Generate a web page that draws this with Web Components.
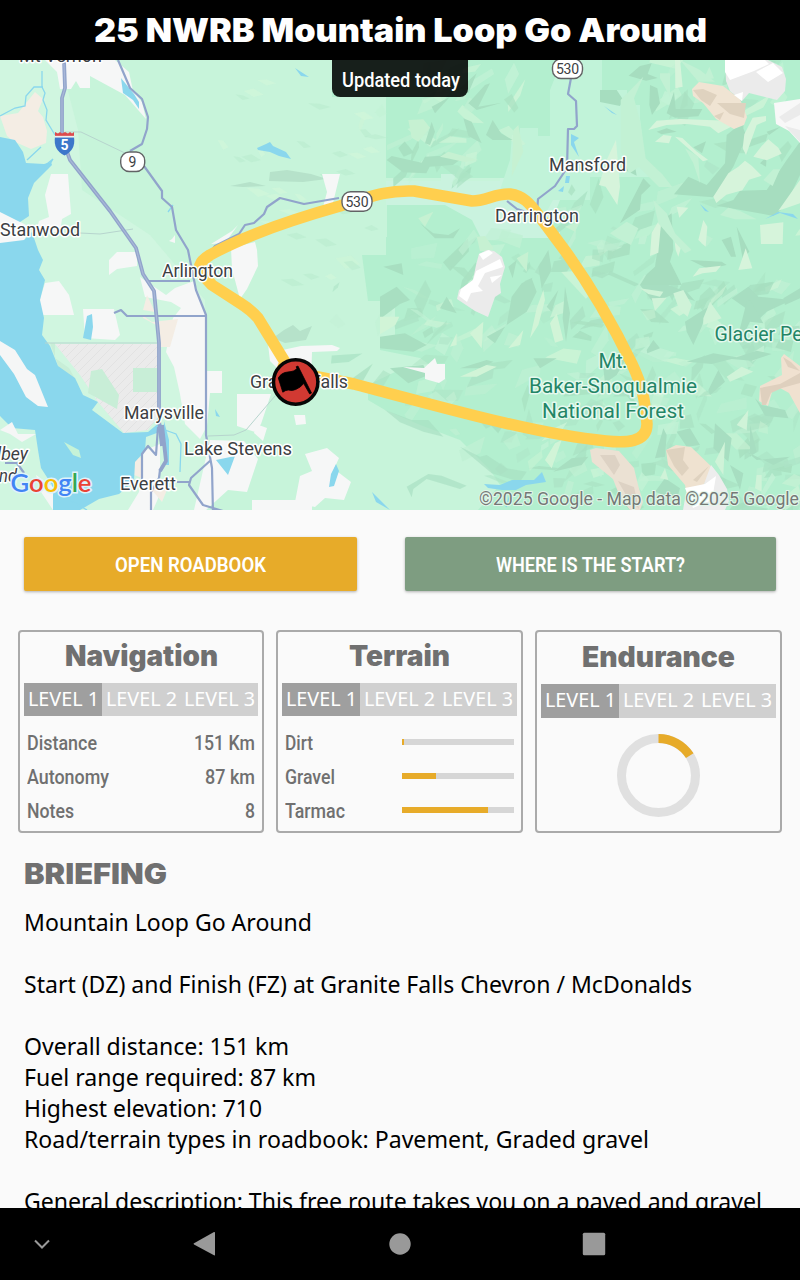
<!DOCTYPE html>
<html lang="en">
<head>
<meta charset="utf-8">
<title>25 NWRB Mountain Loop Go Around</title>
<style>
html, body {
    margin: 0;
    height: 100%;
    overflow: hidden;
    background: #fafafa;
}
</style>
</head>
<body>

<roadbook-page></roadbook-page>

<script>

// < ======================================================
// < Utility Functions
// < ======================================================

/**
 * Attach an open shadow root with styles and markup
 *
 * @param {HTMLElement} element
 * @param {string} css
 * @param {string} html
 */
function render(element, css, html) {
    const root = element.shadowRoot || element.attachShadow({ mode: 'open' });
    root.innerHTML = `<style>${css}</style>${html}`;
}

/**
 * Seeded random number generator, keeps the relief stable between loads
 *
 * @param {number} seed
 * @returns {() => number}
 */
function seeded(seed) {
    return () => {
        seed = (seed * 1664525 + 1013904223) % 4294967296;
        return seed / 4294967296;
    };
}

// < ======================================================
// < Class: Fit Text
// < ======================================================

/**
 * Custom element `<fit-text>`
 * - Condenses or widens one line of text to the `width` attribute
 */
class FitText extends HTMLElement {

    connectedCallback() {
        const width = Number(this.getAttribute('width'));
        render(this, `
            :host { display: inline-block; width: ${width}px; white-space: nowrap; text-align: left; }
            span { display: inline-block; transform-origin: 0 50%; }
        `, `<span><slot></slot></span>`);
        const span = this.shadowRoot.querySelector('span');
        const natural = span.getBoundingClientRect().width;
        if (natural) span.style.transform = `scaleX(${width / natural})`;
    }

}

// < ======================================================
// < Class: Page Header
// < ======================================================

class PageHeader extends HTMLElement {

    connectedCallback() {
        render(this, `
            :host {
                display: flex;
                align-items: center;
                justify-content: center;
                height: 60px;
                background: #000;
                color: #fff;
                font: 900 33px/59px Inter, sans-serif;
            }
        `, `<slot></slot>`);
    }

}

// < ======================================================
// < Class: Route Map
// < ======================================================

/**
 * Relief facets scattered through the forest
 *
 * @returns {string} SVG polygons
 */
function relief() {
    const random = seeded(77);
    const colors = ['#a7dfc0', '#ace4c6', '#c3f2d6', '#cdf4d7', '#bff0d3', '#a9e1c2'];
    let out = '';
    for (let i = 0; i < 560; i++) {
        const x = 335 + random() * 475;
        const y = 58 + random() * 455;
        if (x < 400 && random() < 0.8) continue;
        if (y > 380 && x < 370 + (y - 380) * 1.25) continue;
        if (y > 178 && y < 232 && x < 560) continue;
        if (x > 520 && x < 660 && y < 190) continue;
        if (y > 350 && x < 500 && random() < 0.6) continue;
        if (x > 650 && y > 110 && y < 285 && random() < 0.75) continue;
        const angle = random() < 0.65 ? -1.4 + random() * 1.2 : -0.3 + random() * 1.1;
        const length = 5 + random() * 14;
        const breadth = 2 + random() * 7;
        const c = Math.cos(angle);
        const s = Math.sin(angle);
        const points = [[-length, breadth * 0.3], [-length * random(), -breadth], [length, -breadth * random()], [length * random(), breadth * 0.8]]
            .map(([a, b]) => `${(x + a * c - b * s).toFixed(1)},${(y + a * s + b * c).toFixed(1)}`)
            .join(' ');
        out += `<polygon points="${points}" fill="${colors[Math.floor(random() * 6)]}" opacity="${(0.4 + random() * 0.5).toFixed(2)}"/>`;
    }
    // gentler hills on the western side
    for (let i = 0; i < 34; i++) {
        const x = 215 + random() * 160;
        const y = 70 + random() * 250;
        const w = 4 + random() * 8;
        out += `<path d="M${x} ${y}l${w} ${-3 + random() * 4} ${w} ${3 + random() * 4}-${w} ${1 + random() * 2}z" fill="${random() < 0.6 ? '#b9ebcf' : '#d2f6da'}" opacity=".6"/>`;
    }
    return out;
}

/**
 * Place names as [text, x, baseline, width, size]
 */
const PLACES = [
    ['Mt Vernon', 19, 62, 83, 18],
    ['Stanwood', 0, 236, 80, 18.5],
    ['Arlington', 162, 277, 71, 18.5],
    ['Darrington', 495, 222, 84, 18.5],
    ['Mansford', 549, 171, 77, 18.5],
    ['Granite Falls', 250, 388, 98, 18.5],
    ['Marysville', 124, 419, 80, 18.5],
    ['Lake Stevens', 184, 454.5, 108, 18.5],
    ['Everett', 120, 490, 56, 18.5]
];

class RouteMap extends HTMLElement {

    connectedCallback() {
        const places = PLACES.map(([text, x, y, width, size]) =>
            `<text class="place" x="${x}" y="${y}" textLength="${width}" lengthAdjust="spacingAndGlyphs" font-size="${size}">${text}</text>`
        ).join('');

        render(this, `
            :host { display: block; height: 450px; position: relative; overflow: hidden; }
            svg { display: block; }
            text { font-family: Roboto, sans-serif; }
            .place, .park, .credit { paint-order: stroke; stroke: #fff; stroke-width: 3px; stroke-linejoin: round; }
            .place { fill: #3c4043; }
            .park { fill: #238566; font-size: 20.5px; stroke: #e5f9ee; }
            .credit { fill: #747976; stroke: #e4f6eb; stroke-width: 2px; font-size: 18px; }
            .shield text { fill: #3d4043; font-size: 14px; text-anchor: middle; }
            .island { font-style: italic; }
            .badge {
                position: absolute;
                top: 0;
                left: 332px;
                width: 136px;
                height: 37px;
                box-sizing: border-box;
                padding: 0 0 0 10px;
                border-radius: 0 0 8px 8px;
                background: rgba(0, 0, 0, 0.87);
                color: #fff;
                font: 500 21px/41px Roboto, sans-serif;
            }
        `, `
            <svg width="800" height="450" viewBox="0 60 800 450">
                <defs>
                    <pattern id="hatch" width="9" height="9" patternUnits="userSpaceOnUse">
                        <path d="M-1 10L10-1" stroke="#e2e2e2" stroke-width="1"/>
                    </pattern>
                </defs>
                <rect y="60" width="800" height="450" fill="#c7f4da"/>
                <path d="M0 60H60L78 130 82 190 150 235 205 300 207 510H0z" fill="#d0f6e0"/>

                <!-- forest -->
                <path d="M332 60H800V510H478L500 485 490 470 460 440 420 425 385 410 368 400V385L395 372H440L420 358 380 350V345H385V340H395V295H368V258H387V205H430V192H560V178H386V97H332z" fill="#b3efcf"/>
                <path d="M362 255h24v-18h14v64h-32z" fill="#b3efcf"/>
                <path d="M386 181H441V174H455V181H500V178H560V200L548 230H560V238H505L495 240H482L472 220 445 205H386z" fill="#caf3df"/>
                <path d="M556 60H602V90H627V105H640V118L645 165 662 177H590V200H553L542 220 520 195 500 190 510 160 512 135H520V128H538V136H550V90L556 75z" fill="#c1f3d9"/>
                ${relief()}

                <!-- valleys and slopes, north east -->
                <g transform="translate(600 60) scale(.33333)">
                    <g fill="#a6ddbf">
                        <path d="M437 125L430 205 440 230 400 320 365 375 340 412 250 405 222 403 265 350 320 375 375 310 380 225 405 205 430 190zM500 390L560 300 600 245V345L555 440 520 468 490 462 350 437 400 420 420 392z"/>
                        <path d="M120 18l35-8-12 32 30 12-35 8-52-15zM150 75l22 10 8 45-24 35-8-30zM200 160l22-65 5 52 80 0-12 22-70 4zM170 215l30-10 30 10-45 8zM280 262l38-18-12 36z"/>
                        <path d="M185 480l30-20 5 110-10 35 25 50 10 20H120l20-32 25-23zM270 600l95 5 15 10-55 12zM365 540l28-10 15 60-15 0zM410 500l38 75-20 20-8-42z"/>
                        <path d="M65 232l35 55 10 60-30-15zM60 490l70-135 22 22-28 27-4 45zM0 90l50 0 20 30-10 18-60-12z"/>
                        <path d="M500 215l42-15-35 25zM480 310l20-20-2 30z"/>
                    </g>
                    <g fill="#d6f4db">
                        <path d="M340 410l45-70 30-20 20-18 20 15 30 30-38 12-20 32-48 13-30 25zM428 265l5-42 25-50 40-5 0 15-28 12-32 90zM460 290l25-32 20-20 30 25 10 18-45 20z"/>
                        <path d="M145 210l25-28 70-5 140 5 35 8-60 30-25-20-70-8-60 3zM165 245l25-20 25 3-8 22zM225 230l22 4 42 40 35 25-15 5zM225 0h15l8 80-22 5zM480 495l70-8-2 65-65 0zM150 588l5-70 30-50-10 110zM295 540l15-60 12 20-5 60zM415 630l22-65 20 60zM278 650l20-25 65-8-15 18-40 5z"/>
                        <path d="M230 440l35 3-27 30zM220 515l25 40-10 35-8-20zM20 300l28-60 12 140-8 55-35-55-20-5zM535 452l65-92V430z"/>
                    </g>
                    <g fill="#c2f1d4">
                        <path d="M130 50l-28 65 20 75 15 105 50 48 30 38-40 0-60-60-30 20-25-70V120zM160 420l40 40 25 60 50 50-20 10-45-50-35-40zM240 0l60 30 45 35-50 0z"/>
                        <path d="M310 60l18-40 14 35zM490 360l30-32 20 0-22 50zM360 465l25-22 35 10 50 25-65 0zM30 520l50-35 35 20-22 50-40-20zM255 265l40 25 5 80-20-60zM180 40h30v70l-30-55z"/>
                    </g>
                </g>

                <!-- slopes north of the route -->
                <g transform="translate(380 60) scale(.33333)">
                    <g fill="#a8dfc1">
                        <path d="M20 300l15-12 90 20 10-18 90-5 14 15-20 15-70 5-10 20-70-3zM250 175l25 10 30 65-40-22zM265 130l50-55 15-5-35 70 70-12-75 22zM318 225l20-45 25 40 35 20-60 0z"/>
                        <path d="M135 250l20-65 10 30-15 40zM120 490l40 30 45 5 35-20-20 30-55 0zM10 620l55-10 5 35zM475 620l30-50 10 60-30 55zM385 620l25-20-12 55z"/>
                        <path d="M155 140l55-30-45 50zM240 85l50-45-25 60z"/>
                    </g>
                    <g fill="#c6f1d2">
                        <path d="M85 180l45-2 20 25-35 42-20-12zM180 290l25-15 90 25-40 6zM400 210l15-15 15 80-35 75zM115 475l45-20-25 45zM290 530l25-2 25 35-5 10h-35zM410 595l35-20-5 60zM555 500l45-15-15 30z"/>
                    </g>
                </g>

                <!-- slopes south of the route -->
                <g transform="translate(380 280) scale(.33333)">
                    <g fill="#a8dfc1">
                        <path d="M380 135l15-85 30-40 30-15 15 40-30 60zM0 170l75-10 65 35-40 20-100-10zM30 265l100-10 15 30-60 25zM320 170l55-30-30 50zM240 265l80-25 20 5-40 20zM555 20l15 80-12 85-10-70zM460 235l70 0-50 30z"/>
                        <path d="M15 390l80 30 50 0 45 50-60-15-70-28zM240 500l60 30 20-5 60 40 60 10-20 30-85-25zM80 620l65-38 40 5 75 30-20 10-100-30-40 30-5 25z" opacity=".65"/>
                        <path d="M0 50l50-30 40 40-30 12-60 45zM180 85l20-35 30 50zM500 80l35-50-20 65zM520 575l55-40 50-5-20 25z"/>
                    </g>
                    <g fill="#d1f4d7">
                        <path d="M0 110l58 0-12 25-46 28zM450 175l20-90 20-55 5 30-20 75zM510 130l20-30 20 80-25 8zM270 160l40-35-5 80-15-20zM210 200l20-40 0 35zM240 290l80-35 30 5-60 30zM495 540l30-50 20-10-30 85zM385 205l45-55-10 45z"/>
                    </g>
                </g>

                <!-- slopes, south east -->
                <g transform="translate(600 285) scale(.33333)">
                    <g fill="#a7dec1">
                        <path d="M120 0h85l55 20 25 28-65-20-60 25-15-20zM255 110l70-45-20 60-25 55-20-40zM395 40l50-35 30 30 100 10-75 35-20 20zM260 230l80-25 70 12 60-20 45 10-60 20-60-5-60 15zM140 195l20-30 20 25-38 15zM10 250l75-40-35 60-35 25z"/>
                        <path d="M420 130l20-80 10-5 40 70-40-5-20 40zM340 490l5-75 50 45-10 70zM440 500l30 25 100-10-50 25zM165 520l25-90 10 20-5 65zM230 440l30 45 40-5-30-50zM465 340l20 20 70 15 10 25-70-8zM450 420l20 80-20 15zM550 40l50-30V40l-45 20z"/>
                        <path d="M165 620l30-40 45 30-10 35zM390 540l40 25-10 50zM355 255l-30 60 5 15 45-40z"/>
                    </g>
                    <g fill="#cff3d8">
                        <path d="M220 25l30-10 25 45-12 35-25-20zM310 100l20-50 35 50-55 20zM120 10l70 10-10 15-35-8zM380 275l45-30 35 15-70 30zM155 40l45-2-35 40zM345 530l30-60-5 100zM470 570l15 0 0 50-20-10zM410 420l35-45-5 60zM180 580l15-30 10 35zM85 330l20-40 45 10-45 40z"/>
                    </g>
                </g>
                <path d="M270 172l17-2 24 4 16 5-24 3-34-1zM230 186l20-4 16 4-23 1zM284 330l9-5 7 6 12-5-6 14-21 3-12-5z" fill="#b6e2ca"/>

                <!-- rock and glaciers -->
                <path d="M692 89l7-7 24 4 17 13 7 18-3 8-10 4-18-10-13-16-10-7z" fill="#f0e4d3"/>
                <path d="M693 90l10-1 14 6-7 11-9-6zM717 103l15 0 14 0-2 15-14-4zM714 116l10-4-4 8z" fill="#dfd2bf"/>
                <path d="M725 60h43l14 7 4 12-1 12-8 9-28-7-7 8-12-10-4-10z" fill="#ebebeb"/>
                <path d="M725 60h40l4 4-15 7-24 9-5-8zM756 72l17-9 10 10-15 9zM743 92l-1 9-8-6z" fill="#fff"/>
                <path d="M774 103l26-4v44l-11-12-13-7z" fill="#f8f8f8"/><path d="M779 117l21-14v12l-15 8zM785 126l15 4v12z" fill="#ebebeb"/>
                <path d="M479 254l8-4 7 1 8 6 3 10-5 17 1 9-6 4-7 20-13-6-18-12 2-9 14-10 3-15z" fill="#ebebeb"/>
                <path d="M476 271l24-12 3 8-18 6-7 13 5 5-12 2-4 9-8-6 2-7 12-9zM479 254l10-4 4 3-10 7zM490 277l12-2-10 8z" fill="#fff"/>
                <path d="M781 358l3-4 16 12v47l-11-20-9-5-8 4-4 14-9-5 1-15 22-11z" fill="#f0e1d0"/>
                <path d="M760 388l20-4 20-11v10l-18 5-11 5-5 12-4 0zM783 357l5 10 12 4-9-9z" fill="#dfd0be"/>
                <path d="M590 450l6-2 23 3 15 17 4 17 5 17-3 8h-10l-10-13-7-18-21-17z" fill="#ebe1d3"/>
                <path d="M600 455l15 0 5 10-6 10zM618 481l16 6 5 22-13-14z" fill="#ddd2c4"/>
                <path d="M666 450l10-5 15 2 23 22-10 15-7 26h-7l-5-25-17-20z" fill="#efe2d0"/>
                <path d="M666 450l19-3-2 13 6 8-7 8-8-10zM693 480l16-14-12 16z" fill="#dfd2bf"/>
                <path d="M711 465l8 10 8 14 2 12-4 9h-42l3-17 18-9z" fill="#ededed"/>
                <path d="M685 488l20-4 11-8-4 24-19 8z" fill="#fff"/>

                <!-- towns -->
                <g fill="#f6f7f7">
                    <path d="M45 60H115L129 72 133 91 142 102 146 119 125 95 90 76V88H80L76 81 71 89H60L57 72z"/>
                    <path d="M51 174H68L71 214 62 219 60 232 36 232 39 221 49 217 45 195z"/>
                    <path d="M0 211l26 14-1 18-25 6zM322 174h18l-8 33h-9l4-15zM225 243l13-18-6 6-21 13zM257 250l-2-8-24 6 1 21 8 30 7-10 11-23zM109 260l8-8 20 0v14l-20 3-8 6z"/>
                    <path d="M59 281l10 14 5 20-33 0-2-13 6-19z"/>
                    <path d="M83 309l31 0 6 26-5 5-30-2zM166 295l9-7 19-7 11 30v60h17v22h-12l-3 33-7 13-15-15-5-30-6-27-8-15 7-34 8-10-10-6-26-5-5-20z"/>
                    <path d="M268 344l10 7 23-5 31-1 8 3-3 3-25 1-1 30-16 4-25-25zM237 394h34l-10 30-6 8-18-6zM256 424l11 4-4 13-9-8zM294 415l11 0 1 9-10 1z"/>
                    <path d="M210 440l34 1 14 18-11 33-19-2-22 20h-12zM305 454l22-6 12 10-5 11 17 13-7 18-19-2-10 9-20-5 5-26 12-5zM252 500h60v10h-60z"/>
                    <path d="M403 367l21 1 11-10 2 6h8v15l-6 4-14-4v-6zM172 239l3-4v8l-6-2z"/>
                    <path d="M143 451l17-7v50l-7 16h-25l11-18z"/>
                </g>
                <path d="M55 344H160V414L148 430 124 433 98 402 80 375z" fill="#ebebeb"/>
                <path d="M55 344H160V414L148 430 124 433 98 402 80 375z" fill="url(#hatch)"/>
                <path d="M133 368h27v24h-27zM91 371l11-2 17 26-2 14-29-16zM50 343h5v15l14 10 10 18-10-12-10-6z" fill="#c8eed7"/>
                <path d="M0 116l18-3 17-21 8 7-5 12 5 6 4 14-1 12-15 6-18-8-6-5zM142 315l10 7 26-3-8 28h-10l-2-21-15-8zM147 295l8 17-12-2zM135 457l8 1-1 20-8-3zM152 490l10-10 7 5-7 17z" fill="#f4ede4"/>

                <!-- water -->
                <g fill="#8ad7ed">
                    <path d="M0 137L15 140 23 152 26 163 44 164 51 162 52 165 34 183 28 198 29 216 20 222 0 212zM0 243L24 240 32 232 38 250 43 260 39 270 45 280 40 300 44 318 42 335 50 346 58 366 75 378 83 395 98 402 92 410 123 433 148 432 160 422 165 430 146 437 145 451 135 462 134 481 119 494 99 499 80 510H53L52 485 41 468 38 450 35 430 12 428 0 416z"/>
                    <path d="M121 78l13 16 5 8v7l-6-9-10-7zM257 148l9-4 4-2 3 4 13 6 5 7-12-3-9-4-12-2zM87 316l5-2 1 13-2 13-8-2z"/>
                    <path d="M484 484l16 1 12-5 22 0 8-8 4 10-20 3-10 5-14 0-14-2zM216 460l19-4-7 19zM164 421l5 19v25h-5zM331 474l5-10 3 7-5 15-5 1zM372 492l18 18-14-8zM215 409l5 8-4-1z"/>
                    <path d="M571 134l8 4-5 4 5 15-8-12zM566 176l4 0-1 7-4 0zM558 191l6-5-1 6zM604 106l13 9-5-2zM700 204l9 8-4-1zM765 219l13-7 15 2 5 5-18-6zM295 68l14 9-8-1z"/>
                </g>
                <g fill="none" stroke="#8ad7ed" stroke-width="1.300">
                    <path d="M0 116l15-8 10-2 1-10 8-9 9 0M42 71v16l3 6-2 7 4 10-1 10 9 15M27 160l14-13M37 172l16-13-6 10M165 430l11 4 5 10-1 28M510 495l-4 12M173 205l-5 7M70 500l17 10"/>
                </g>
                <path d="M0 341L15 350 27 369 35 375 48 407 38 406 26 397 14 374 0 355z" fill="#f5f6f6"/>
                <path d="M64 442l15 8 2 8-8-3z" fill="#c5f3d8"/>
                <path d="M0 430l12-8 6 12 18 0-14 8-12-8zM36 475l17 12v23l-12-18z" fill="#f5f6f6"/>

                <!-- minor roads -->
                <g fill="none" stroke="#b7d5ce" stroke-width="1">
                    <path d="M65 132h16l46 22M80 233l20 1 33-5M208 436l26-1 12-5 29-34M45 343h113"/>
                </g>
                <!-- highways -->
                <g fill="none" stroke="#91a4cb" stroke-width="2.200" stroke-linejoin="round">
                    <path stroke-width="3.800" d="M64 60l1 28-3 10V138l8 22 40 51 26 37 7 26 11 17 5 52v78l3 25M162 425l4 36-6 10"/>
                    <path d="M160 470l-1 8-8 14v18M118 60l12 28 12 11 6 18-1 12-5 15-12 7M144 166l18 25v7l10 9 4 23 12 20 8 40 10 25v120l6 33 1 46M201 264l14-18 24-12 6-9 9-2 10-9 3-7 13-9 24 6 35-6M507 201l10 8 19 6M537 213l1-14 17-13 12-18 1-39h6l3-3-1-25-8-7 3-16M148 281h42M114 313l7-3 6 6h78M211 460l-20 18-2 7 14 20 20 6M177 482h13M158 427l-2 28-8-9-6 8v28M5 463l12 0 7 10"/>
                </g>
                <path d="M64 64l1 24-3 10V138l8 22 40 51 26 37 7 26 11 17 5 52v78" fill="none" stroke="#a9b8d8" stroke-width="1.200"/>

                <!-- route -->
                <path d="M296 380L285 362 258 318C252 311 248 308 240 303L212 285 200 272C198 264 202 260 210 255 244 236 294 219 340 206 377 194 391 190 414 191L472 201C486 201 496 193 510 194 523 196 529 202 540 217L566 252C594 291 615 329 632 364 642 385 645 399 647 424 647 443 625 443 606 441 534 434 438 406 354 384L277 369" fill="none" stroke="#ffcf4e" stroke-width="11.500" stroke-linejoin="round"/>

                ${places}
                <g text-anchor="middle">
                    <text class="park" x="613" y="368" textLength="29">Mt.</text>
                    <text class="park" x="613" y="393" textLength="168" lengthAdjust="spacingAndGlyphs">Baker-Snoqualmie</text>
                    <text class="park" x="613" y="418" textLength="142" lengthAdjust="spacingAndGlyphs">National Forest</text>
                </g>
                <text class="park" x="714.500" y="341" textLength="88" lengthAdjust="spacingAndGlyphs">Glacier Pe</text>
                <g font-size="18.500">
                    <text class="place island" x="-3" y="460" textLength="31" lengthAdjust="spacingAndGlyphs">lbey</text>
                    <text class="place island" x="-1" y="482" textLength="18" lengthAdjust="spacingAndGlyphs">nd</text>
                </g>

                <!-- road shields -->
                <g class="shield" stroke-linejoin="round">
                    <g fill="#fff" stroke="#626365" stroke-width="1.400">
                        <rect x="120.700" y="152" width="24" height="19.500" rx="8.500"/>
                        <rect x="342" y="191.800" width="30" height="19.500" rx="8.500"/>
                        <rect x="552.500" y="59" width="30" height="19.500" rx="8.500"/>
                    </g>
                    <text x="132.500" y="166.500">9</text>
                    <text x="357" y="206.500" textLength="23">530</text>
                    <text x="567.500" y="73.500" textLength="23">530</text>
                    <path d="M55 137h19q2 13-9.500 18.500Q53 150 55 137z" fill="#3c77ca"/>
                    <path d="M55 132l3 1.500 2-1.500 2 1.500 3-1.500 3 1.500 2-1.500 2 1.500 2-1.500v4H55z" fill="#dc4b4d"/>
                    <path d="M55 136.700h19" stroke="#eee" stroke-width="1.700"/>
                    <text x="64.500" y="150" style="fill:#fff;font-weight:700">5</text>
                </g>

                <!-- start marker -->
                <circle cx="295.700" cy="382" r="22.200" fill="#d13932" stroke="#060606" stroke-width="3.500"/>
                <path d="M278.300 378q3-5.500 9.500-6 7-.5 9-3.500l-.6-1.800 1.800-.6L311.500 393l-1.800 1-6-10.500q-3 4-8 6-3.500 1.500-7.500.5-3 .2-5.400 2.200z" stroke="#000" stroke-width=".8" stroke-linejoin="round"/>

                <text x="10.500" y="492" textLength="81" lengthAdjust="spacingAndGlyphs" font-size="25" font-weight="600" stroke="#dff3fa" stroke-width="3" paint-order="stroke" style="font-family: Lato, sans-serif"><tspan fill="#4285f4">G</tspan><tspan fill="#ea4335">o</tspan><tspan fill="#fbbc04">o</tspan><tspan fill="#4285f4">g</tspan><tspan fill="#34a853">l</tspan><tspan fill="#ea4335">e</tspan></text>
                <text class="credit" x="479" y="505" textLength="320" lengthAdjust="spacingAndGlyphs">©2025 Google - Map data ©2025 Google</text>
            </svg>
            <div class="badge"><fit-text width="118">Updated today</fit-text></div>
        `);
    }

}

// < ======================================================
// < Class: Action Button
// < ======================================================

class ActionButton extends HTMLElement {

    connectedCallback() {
        render(this, `
            :host { display: block; }
            button {
                display: block;
                width: 100%;
                height: 54px;
                padding: 2px 0 0;
                border: 0;
                border-radius: 2px;
                background: var(--fill);
                color: #fff;
                box-shadow: 0 1px 3px rgba(0, 0, 0, 0.3);
                font: 600 21px/52px Roboto, sans-serif;
            }
        `, `<button><slot></slot></button>`);
    }

}

// < ======================================================
// < Class: Level Bar
// < ======================================================

class LevelBar extends HTMLElement {

    connectedCallback() {
        render(this, `
            :host { display: block; background: #d0d0d0; }
            div { display: grid; grid-template-columns: 78px 78px 1fr; height: 100%; }
            span {
                padding-left: 4px;
                color: #fff;
                font: 400 20.5px/31px "Noto Sans", sans-serif;
            }
            .on { background: #9f9f9f; }
        `, `
            <div>
                <span class="on"><fit-text width="71">LEVEL 1</fit-text></span>
                <span><fit-text width="71">LEVEL 2</fit-text></span>
                <span><fit-text width="71">LEVEL 3</fit-text></span>
            </div>
        `);
    }

}

// < ======================================================
// < Class: Stat Card
// < ======================================================

/**
 * Custom element `<stat-card>`
 * - `title` slot for heading, default slot for contents
 */
class StatCard extends HTMLElement {

    connectedCallback() {
        render(this, `
            :host {
                display: flex;
                flex-direction: column;
                box-sizing: border-box;
                height: 203px;
                padding: 0 4px;
                border: 2px solid #aaa;
                border-radius: 4px;
                color: #707070;
            }
            h2 {
                height: 51px;
                margin: 0;
                font: 900 28px/48px Inter, sans-serif;
                text-align: center;
            }
            level-bar { height: 33px; }
            :host([tall]) h2 { height: 52px; line-height: 50px; }
            :host([tall]) level-bar { height: 34px; }
            .body { padding-top: 10px; }
        `, `
            <h2><slot name="title"></slot></h2>
            <level-bar></level-bar>
            <div class="body"><slot></slot></div>
        `);
    }

}

// < ======================================================
// < Class: Stat Row
// < ======================================================

class StatRow extends HTMLElement {

    connectedCallback() {
        const fill = this.getAttribute('fill');
        const bar = fill === null ? '' : `<div class="track"><div></div></div>`;
        render(this, `
            :host {
                display: flex;
                align-items: center;
                justify-content: space-between;
                height: 34px;
                padding: 0 3px;
                font: 500 20px/34px Roboto, sans-serif;
            }
            .track { width: 112px; height: 6px; margin-top: -2px; background: #d6d6d6; }
            .track div { width: ${fill}px; height: 6px; background: #e7ab29; }
        `, `<slot></slot>${bar}`);
    }

}

// < ======================================================
// < Class: Progress Ring
// < ======================================================

class ProgressRing extends HTMLElement {

    connectedCallback() {
        render(this, `
            :host { display: flex; justify-content: center; padding-top: 6px; }
        `, `
            <svg width="84" height="84" viewBox="0 0 84 84" fill="none" stroke-width="9">
                <circle cx="41.500" cy="41.500" r="37" stroke="#e0e0e0"/>
                <circle cx="41.500" cy="41.500" r="37" stroke="#e7ab29" pathLength="100" stroke-dasharray="16 84" transform="rotate(-90 41.500 41.500)"/>
            </svg>
        `);
    }

}

// < ======================================================
// < Class: Briefing Text
// < ======================================================

class BriefingText extends HTMLElement {

    connectedCallback() {
        render(this, `
            :host { display: block; padding: 24px 24px 0; color: #000; }
            h2 {
                margin: 0;
                height: 50px;
                color: #707070;
                font: 900 28px/35px Inter, sans-serif;
            }
            p { margin: 0; height: 31px; font: 400 22.7px/31px "Noto Sans", sans-serif; }
        `, `
            <h2><fit-text width="143">BRIEFING</fit-text></h2>
            <p><fit-text width="288">Mountain Loop Go Around</fit-text></p>
            <p></p>
            <p><fit-text width="668">Start (DZ) and Finish (FZ) at Granite Falls Chevron / McDonalds</fit-text></p>
            <p></p>
            <p><fit-text width="265">Overall distance: 151 km</fit-text></p>
            <p><fit-text width="292">Fuel range required: 87 km</fit-text></p>
            <p><fit-text width="238">Highest elevation: 710</fit-text></p>
            <p><fit-text width="625">Road/terrain types in roadbook: Pavement, Graded gravel</fit-text></p>
            <p></p>
            <p><fit-text width="738">General description: This free route takes you on a paved and gravel</fit-text></p>
        `);
    }

}

// < ======================================================
// < Class: System Nav
// < ======================================================

class SystemNav extends HTMLElement {

    connectedCallback() {
        render(this, `
            :host {
                display: grid;
                grid-template-columns: 84px 240px 152px 236px 88px;
                align-items: center;
                justify-items: center;
                height: 72px;
                background: #000;
            }
            svg { display: block; }
        `, `
            <svg width="16" height="16" fill="none" stroke="#999" stroke-width="2"><path d="M1 4.500l7 7 7-7"/></svg>
            <svg width="24" height="26" fill="#999"><path d="M2 12.300L22 1q1-.3 1 .8v22q0 1-1 .5L2 13.500q-1-.6 0-1.200z"/></svg>
            <svg width="22" height="22" fill="#999"><circle cx="11" cy="11" r="10.700"/></svg>
            <svg width="24" height="24" fill="#999"><rect x=".8" y=".8" width="22.400" height="22.400" rx="1.500"/></svg>
        `);
    }

}

// < ======================================================
// < Class: Roadbook Page
// < ======================================================

class RoadbookPage extends HTMLElement {

    connectedCallback() {
        render(this, `
            :host { display: flex; flex-direction: column; width: 800px; height: 1280px; background: #fafafa; }
            main { flex: 1; min-height: 0; overflow: hidden; }
            .actions {
                display: grid;
                grid-template-columns: 333px 371px;
                gap: 48px;
                padding: 27px 24px 39px;
            }
            .cards {
                display: grid;
                grid-template-columns: 246px 247px 247px;
                gap: 12px;
                padding: 0 18px;
            }
        `, `
            <page-header><fit-text width="613">25 NWRB Mountain Loop Go Around</fit-text></page-header>
            <main>
                <route-map></route-map>
                <div class="actions">
                    <action-button style="--fill: #e7ab29"><fit-text width="151">OPEN ROADBOOK</fit-text></action-button>
                    <action-button style="--fill: #7e9d81"><fit-text width="189">WHERE IS THE START?</fit-text></action-button>
                </div>
                <div class="cards">
                    <stat-card>
                        <fit-text slot="title" width="153">Navigation</fit-text>
                        <stat-row><fit-text width="70">Distance</fit-text><fit-text width="61">151 Km</fit-text></stat-row>
                        <stat-row><fit-text width="82">Autonomy</fit-text><fit-text width="50">87 km</fit-text></stat-row>
                        <stat-row><fit-text width="47">Notes</fit-text><fit-text width="10">8</fit-text></stat-row>
                    </stat-card>
                    <stat-card>
                        <fit-text slot="title" width="101">Terrain</fit-text>
                        <stat-row fill="2"><fit-text width="28">Dirt</fit-text></stat-row>
                        <stat-row fill="34"><fit-text width="50">Gravel</fit-text></stat-row>
                        <stat-row fill="86"><fit-text width="60">Tarmac</fit-text></stat-row>
                    </stat-card>
                    <stat-card tall>
                        <fit-text slot="title" width="153">Endurance</fit-text>
                        <progress-ring></progress-ring>
                    </stat-card>
                </div>
                <briefing-text></briefing-text>
            </main>
            <system-nav></system-nav>
        `);
    }

}

// < ======================================================
// < Custom Element Registration
// < ======================================================

customElements.define('page-header', PageHeader);
customElements.define('route-map', RouteMap);
customElements.define('action-button', ActionButton);
customElements.define('level-bar', LevelBar);
customElements.define('stat-card', StatCard);
customElements.define('stat-row', StatRow);
customElements.define('progress-ring', ProgressRing);
customElements.define('briefing-text', BriefingText);
customElements.define('system-nav', SystemNav);
customElements.define('roadbook-page', RoadbookPage);

// defined last so the surrounding fonts are known when text is measured
customElements.define('fit-text', FitText);

</script>
</body>
</html>
